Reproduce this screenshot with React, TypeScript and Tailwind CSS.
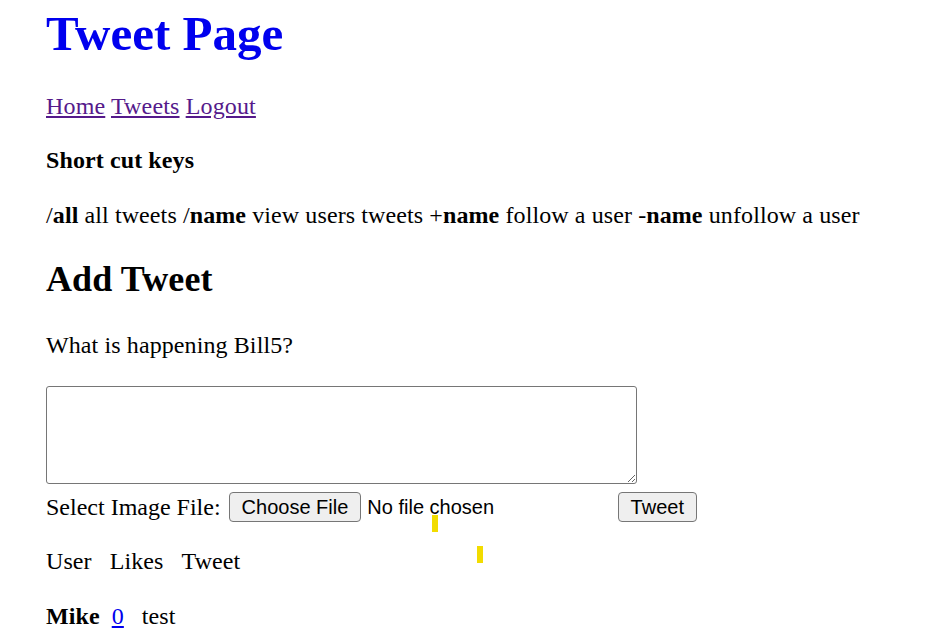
import React from "react"

const serif = "font-['Liberation_Serif','Times_New_Roman',serif]"
const sans = "font-['Liberation_Sans',Arial,sans-serif]"

function FakeButton({ label, className = "" }: { label: string; className?: string }) {
  return (
    <span
      className={`${sans} flex h-[30px] items-center rounded-[4px] border border-[#767676] bg-[#efefef] px-[12px] text-[20px] leading-[23px] text-black ${className}`}
    >
      {label}
    </span>
  )
}

export default function App() {
  return (
    <div className={`${serif} relative min-h-screen bg-white pl-[46px] pt-[6px] text-[24px] tracking-[0.1px] text-black`}>
      <h1 className="text-[49px] font-bold leading-[56px] tracking-normal text-[#0000ee]">Tweet Page</h1>

      <nav className="mt-[29px] leading-[30px] tracking-[0.15px]">
        <a href="#" className="text-[#551a8b] underline">Home</a>{" "}
        <a href="#" className="text-[#551a8b] underline">Tweets</a>{" "}
        <a href="#" className="text-[#551a8b] underline">Logout</a>
      </nav>

      <p className="mt-[24px] font-bold leading-[30px]">Short cut keys</p>

      <p className="mt-[25px] leading-[30px]">
        /<b>all</b> all tweets /<b>name</b> view users tweets +<b>name</b> follow a user -<b>name</b> unfollow a user
      </p>

      <h2 className="mt-[28px] text-[36px] font-bold leading-[42px]">Add Tweet</h2>

      <p className="mt-[30px] leading-[30px]">What is happening Bill5?</p>

      <textarea className="mt-[26px] block h-[98px] w-[591px] rounded-[3px] border border-[#767676] bg-white" />

      <div className="mt-[8px] flex h-[30px] items-start tracking-normal">
        <span className="pt-[2px] leading-[26px]">Select Image File:</span>
        <div className="ml-[8px] flex w-[383px] items-start">
          <FakeButton label="Choose File" />
          <span className={`${sans} ml-[6px] pt-[4px] text-[20px] leading-[23px]`}>No file chosen</span>
        </div>
        <FakeButton label="Tweet" className="ml-[6px] px-[11px]" />
      </div>

      <p className="mt-[24px] leading-[30px]">
        <span>User</span>
        <span className="ml-[18px]">Likes</span>
        <span className="ml-[18px]">Tweet</span>
      </p>

      <p className="mt-[25px] leading-[30px]">
        <b>Mike</b>
        <a href="#" className="ml-[12px] text-[#0000ee] underline">0</a>
        <span className="ml-[18px]">test</span>
      </p>

      {/* cursor marks captured in the screenshot */}
      <span className="absolute left-[432px] top-[515px] h-[17px] w-[6px] bg-[#f2dc00]" />
      <span className="absolute left-[477px] top-[546px] h-[17px] w-[6px] bg-[#f2dc00]" />
    </div>
  )
}
